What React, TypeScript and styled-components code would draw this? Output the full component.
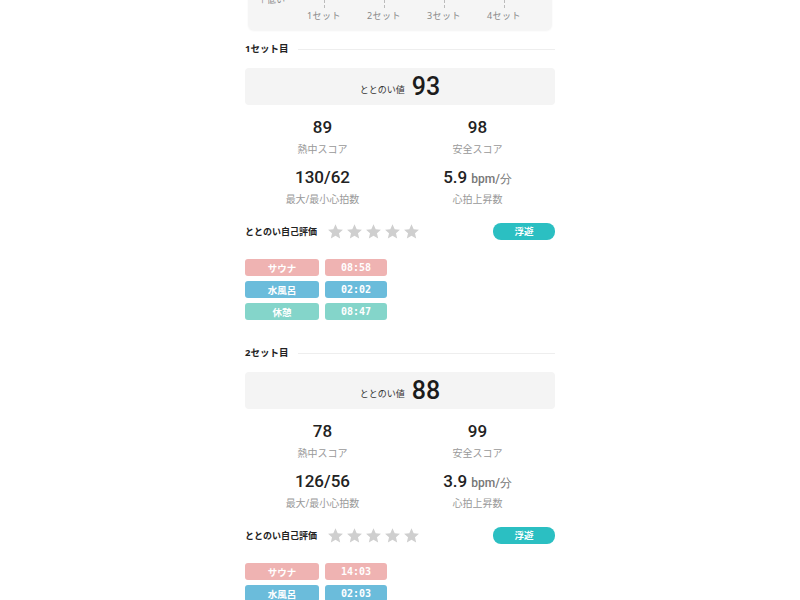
import React from 'react'
import styled, { createGlobalStyle } from 'styled-components'

const GlobalStyle = createGlobalStyle`
  body {
    margin: 0;
    background: #ffffff;
    font-family: 'Noto Sans', 'Noto Sans CJK JP', sans-serif;
    color: #222;
  }
`

type Phase = 'sauna' | 'water' | 'rest'

type SetData = {
  title: string
  totonoi: number
  heat: number
  safety: number
  heart: string
  rise: string
  mood: string
  phases: Array<{ kind: Phase; label: string; time: string }>
}

const phaseColors: Record<Phase, string> = {
  sauna: '#efb3b2',
  water: '#6bbcdb',
  rest: '#84d5ca',
}

const sets: SetData[] = [
  {
    title: '1セット目',
    totonoi: 93,
    heat: 89,
    safety: 98,
    heart: '130/62',
    rise: '5.9',
    mood: '浮遊',
    phases: [
      { kind: 'sauna', label: 'サウナ', time: '08:58' },
      { kind: 'water', label: '水風呂', time: '02:02' },
      { kind: 'rest', label: '休憩', time: '08:47' },
    ],
  },
  {
    title: '2セット目',
    totonoi: 88,
    heat: 78,
    safety: 99,
    heart: '126/56',
    rise: '3.9',
    mood: '浮遊',
    phases: [
      { kind: 'sauna', label: 'サウナ', time: '14:03' },
      { kind: 'water', label: '水風呂', time: '02:03' },
      { kind: 'rest', label: '休憩', time: '08:51' },
    ],
  },
]

const numberFont = "Roboto, 'Liberation Sans', sans-serif"

const StyledPage = styled.div`
  width: 310px;
  margin: 0 auto;
  display: flex;
  flex-direction: column;
`

const StyledChartCard = styled.div`
  margin: -10px 3px 0;
  height: 40px;
  background: #f5f5f5;
  border-radius: 0 0 6px 6px;
  box-shadow: 0 1px 2px rgba(0, 0, 0, 0.05);
  display: flex;
  flex-direction: column;
`

const StyledAxisNote = styled.div`
  height: 10px;
  padding-left: 10px;
  font-size: 9px;
  line-height: 20px;
  color: #888;
`

const StyledAxis = styled.div`
  display: grid;
  grid-template-columns: repeat(4, 60px);
  padding-left: 46px;
`

const StyledTick = styled.div`
  display: flex;
  flex-direction: column;
  align-items: center;
  font-size: 9px;
  line-height: 13px;
  color: #888;
  letter-spacing: 0.5px;

  &::before {
    content: '';
    width: 0;
    height: 8px;
    border-left: 1px dashed #bbb;
    margin-bottom: 1px;
  }
`

const StyledSection = styled.section`
  display: flex;
  flex-direction: column;
  padding-top: 13px;
  padding-bottom: 14px;
`

const StyledHeading = styled.h2`
  margin: 0;
  display: flex;
  align-items: center;
  gap: 10px;
  font-size: 9.5px;
  font-weight: 700;
  line-height: 12px;
  color: #222;

  &::after {
    content: '';
    flex: 1;
    border-top: 1px solid #eee;
  }
`

const StyledScoreBox = styled.div`
  margin-top: 13px;
  height: 37px;
  background: #f4f4f4;
  border-radius: 4px;
  display: flex;
  align-items: center;
  justify-content: center;
  gap: 7px;
`

const StyledScoreLabel = styled.span`
  font-size: 9px;
  color: #333;
  padding-top: 6px;
`

const StyledScoreValue = styled.span`
  font-family: ${numberFont};
  font-size: 25px;
  font-weight: 500;
  color: #1c1c1c;
`

const StyledStats = styled.div`
  display: grid;
  grid-template-columns: 1fr 1fr;
  row-gap: 10px;
  margin-top: 11px;
`

const StyledStat = styled.div`
  display: flex;
  flex-direction: column;
  align-items: center;
`

const StyledStatValue = styled.div`
  font-family: ${numberFont};
  font-size: 17px;
  font-weight: 500;
  height: 22px;
  line-height: 22px;
  white-space: nowrap;
  color: #222;
`

const StyledUnit = styled.span`
  font-size: 12px;
  font-weight: 500;
  line-height: 1;
  color: #777;
  margin-left: 4px;
`

const StyledStatLabel = styled.div`
  font-size: 10px;
  line-height: 14px;
  margin-top: 4px;
  color: #999;
`

const StyledRating = styled.div`
  display: flex;
  align-items: center;
  margin-top: 16px;
  height: 18px;
`

const StyledRatingLabel = styled.span`
  font-size: 9px;
  font-weight: 600;
  color: #222;
  width: 82px;
`

const StyledStars = styled.div`
  display: flex;
  gap: 2px;
  flex: 1;
`

const StyledBadge = styled.span`
  width: 62px;
  height: 17px;
  border-radius: 8px;
  background: #2bbfc2;
  color: #fff;
  font-size: 9.5px;
  font-weight: 600;
  display: flex;
  align-items: center;
  justify-content: center;
`

const StyledPhases = styled.div`
  display: grid;
  grid-template-columns: 74px 62px;
  column-gap: 6px;
  row-gap: 5px;
  margin-top: 19px;
`

const StyledPill = styled.div<{ $kind: Phase; $mono?: boolean }>`
  height: 17px;
  border-radius: 3px;
  background: ${(p) => phaseColors[p.$kind]};
  color: #fff;
  font-size: ${(p) => (p.$mono ? '10px' : '9.5px')};
  font-weight: 600;
  font-family: ${(p) => (p.$mono ? "'DejaVu Sans Mono', monospace" : "'Noto Sans CJK JP', sans-serif")};
  display: flex;
  align-items: center;
  justify-content: center;
`

const Star = () => (
  <svg width="17" height="17" viewBox="0 0 24 24">
    <path
      d="M12 1.8l3.1 6.9 7.4.7-5.6 5 1.7 7.4L12 17.9l-6.6 3.9 1.7-7.4-5.6-5 7.4-.7z"
      fill="#cfcfcf"
    />
  </svg>
)

const SetSection = ({ data }: { data: SetData }) => (
  <StyledSection>
    <StyledHeading>{data.title}</StyledHeading>
    <StyledScoreBox>
      <StyledScoreLabel>ととのい値</StyledScoreLabel>
      <StyledScoreValue>{data.totonoi}</StyledScoreValue>
    </StyledScoreBox>
    <StyledStats>
      <StyledStat>
        <StyledStatValue>{data.heat}</StyledStatValue>
        <StyledStatLabel>熱中スコア</StyledStatLabel>
      </StyledStat>
      <StyledStat>
        <StyledStatValue>{data.safety}</StyledStatValue>
        <StyledStatLabel>安全スコア</StyledStatLabel>
      </StyledStat>
      <StyledStat>
        <StyledStatValue>{data.heart}</StyledStatValue>
        <StyledStatLabel>最大/最小心拍数</StyledStatLabel>
      </StyledStat>
      <StyledStat>
        <StyledStatValue>
          {data.rise}
          <StyledUnit>bpm/分</StyledUnit>
        </StyledStatValue>
        <StyledStatLabel>心拍上昇数</StyledStatLabel>
      </StyledStat>
    </StyledStats>
    <StyledRating>
      <StyledRatingLabel>ととのい自己評価</StyledRatingLabel>
      <StyledStars>
        {[0, 1, 2, 3, 4].map((i) => (
          <Star key={i} />
        ))}
      </StyledStars>
      <StyledBadge>{data.mood}</StyledBadge>
    </StyledRating>
    <StyledPhases>
      {data.phases.map((p) => (
        <React.Fragment key={p.kind}>
          <StyledPill $kind={p.kind}>{p.label}</StyledPill>
          <StyledPill $kind={p.kind} $mono>
            {p.time}
          </StyledPill>
        </React.Fragment>
      ))}
    </StyledPhases>
  </StyledSection>
)

export default function App() {
  return (
    <>
      <GlobalStyle />
      <StyledPage>
        <StyledChartCard>
          <StyledAxisNote>↑低い</StyledAxisNote>
          <StyledAxis>
            {['1セット', '2セット', '3セット', '4セット'].map((l) => (
              <StyledTick key={l}>{l}</StyledTick>
            ))}
          </StyledAxis>
        </StyledChartCard>
        {sets.map((s) => (
          <SetSection key={s.title} data={s} />
        ))}
      </StyledPage>
    </>
  )
}
